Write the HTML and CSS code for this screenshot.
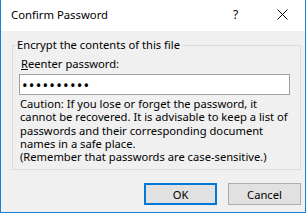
FILE: index.html
```html
<!DOCTYPE html>
<html>
<head>
<meta charset="utf-8">
<link rel="stylesheet" href="styles.css">
</head>
<body>
<div class="window">
  <div class="titlebar">
    <span class="title">Confirm Password</span>
    <span class="help">?</span>
    <span class="close">
      <svg width="11" height="11" viewBox="0 0 11 11"><path d="M0.5 0.5 L10.5 10.5 M10.5 0.5 L0.5 10.5" stroke="#000" stroke-width="1" fill="none"/></svg>
    </span>
  </div>
  <div class="body">
    <fieldset class="group">
      <legend class="legend">Encrypt the contents of this file</legend>
      <label class="field-label" for="pw"><u>R</u>eenter password:</label>
      <input class="field" id="pw" type="password" value="1234567890">
      <p class="note">Caution: If you lose or forget the password, it<br>cannot be recovered. It is advisable to keep a list of<br>passwords and their corresponding document<br>names in a safe place.<br>(Remember that passwords are case-sensitive.)</p>
    </fieldset>
    <div class="buttons">
      <button class="btn btn-default">OK</button>
      <button class="btn">Cancel</button>
    </div>
  </div>
</div>
</body>
</html>
```
FILE: styles.css
```css
html, body {
  margin: 0;
  padding: 0;
  background: #ffffff;
}
body {
  font-family: "Noto Sans", "Open Sans", sans-serif;
  font-size: 11.2px;
  color: #000;
}
.window {
  width: 304px;
  height: 212px;
  border: 1px solid #1b7fd7;
  border-top: none;
  background: #f0f0f0;
  display: flex;
  flex-direction: column;
}
.titlebar {
  height: 31px;
  background: #ffffff;
  display: flex;
  align-items: center;
  padding-left: 10px;
  flex: none;
}
.title {
  flex: 1;
  font-size: 11.3px;
  line-height: 16px;
  padding-bottom: 2px;
}
.help {
  font-size: 12px;
  width: 44px;
  line-height: 16px;
  padding-bottom: 2px;
}
.close {
  width: 28px;
  display: flex;
  padding-bottom: 2px;
}
.body {
  flex: 1;
  display: flex;
  flex-direction: column;
}
.group {
  margin: 6px 4px 0 11px;
  border: 1px solid #dcdcdc;
  padding: 0 10px 0 6px;
  min-width: 0;
}
.legend {
  padding: 0 2px;
  margin-left: -4px;
  line-height: 16px;
}
.field-label {
  display: block;
  margin: 3px 0 0 2px;
  line-height: 16px;
}
.field {
  display: block;
  box-sizing: border-box;
  width: 100%;
  height: 21px;
  margin: 2px 0 0 0;
  border: 1px solid #a0a0a0;
  background: #fff;
  padding: 0 2px;
  font-family: "Noto Sans", sans-serif;
  font-size: 15px;
  letter-spacing: 1.2px;
  outline: none;
}
.note {
  margin: 2px 0 0 1px;
  line-height: 13.3px;
  padding-bottom: 6px;
  white-space: nowrap;
}
.buttons {
  display: flex;
  justify-content: flex-end;
  gap: 11px;
  margin: 13px 4px 0 0;
}
.btn {
  box-sizing: border-box;
  width: 73px;
  height: 22px;
  background: #e1e1e1;
  border: 1px solid #adadad;
  font-family: "Noto Sans", sans-serif;
  font-size: 11.2px;
  color: #000;
  padding: 0;
}
.btn-default {
  border: 2px solid #0078d7;
}
```
